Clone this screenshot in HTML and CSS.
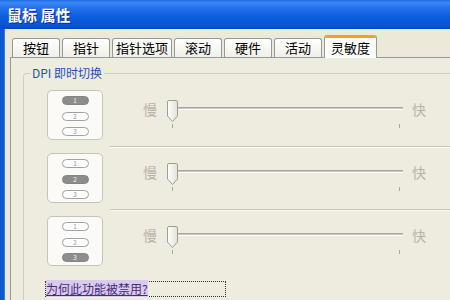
FILE: index.html
```html
<!DOCTYPE html>
<html>
	<head>
		<meta charset="utf-8">
		<title>鼠标 属性</title>
		<link rel="stylesheet" href="styles.css">
	</head>
	<body>
		<div class="window">
			<div class="titlebar">鼠标 属性</div>
			<div class="client">
				<div class="tabs">
					<div class="tab">按钮</div>
					<div class="tab">指针</div>
					<div class="tab">指针选项</div>
					<div class="tab">滚动</div>
					<div class="tab">硬件</div>
					<div class="tab">活动</div>
					<div class="tab active">灵敏度</div>
				</div>
				<div class="panel">
					<fieldset class="group">
						<legend>DPI 即时切换</legend>
						<div class="rows">
							<div class="row">
								<div class="card">
									<div class="pill on">1</div>
									<div class="pill">2</div>
									<div class="pill">3</div>
								</div>
								<div class="slider-col">
									<span class="lbl">慢</span>
									<svg class="slider" width="240" height="32" viewBox="0 0 240 32">
										<defs>
											<linearGradient id="th" x1="0" y1="0" x2="1" y2="0">
												<stop offset="0" stop-color="#ffffff"/>
												<stop offset="1" stop-color="#e2e0d6"/>
											</linearGradient>
										</defs>
										<rect x="12" y="9" width="226" height="1" fill="#aaa79b"/>
										<rect x="12" y="10" width="226" height="1" fill="#c9c6ba"/>
										<rect x="12" y="11" width="226" height="1" fill="#ffffff"/>
										<path d="M2.5 4 Q2.5 2.5 4 2.5 H11 Q12.5 2.5 12.5 4 V18 L7.5 23.5 L2.5 18 Z" fill="url(#th)" stroke="#a09e94"/>
										<rect x="7" y="26" width="1" height="4" fill="#aaa79b"/>
										<rect x="234" y="26" width="1" height="4" fill="#aaa79b"/>
									</svg>
									<span class="lbl fast">快</span>
								</div>
							</div>
							<div class="row">
								<div class="card">
									<div class="pill">1</div>
									<div class="pill on">2</div>
									<div class="pill">3</div>
								</div>
								<div class="slider-col">
									<span class="lbl">慢</span>
									<svg class="slider" width="240" height="32" viewBox="0 0 240 32">
										<rect x="12" y="9" width="226" height="1" fill="#aaa79b"/>
										<rect x="12" y="10" width="226" height="1" fill="#c9c6ba"/>
										<rect x="12" y="11" width="226" height="1" fill="#ffffff"/>
										<path d="M2.5 4 Q2.5 2.5 4 2.5 H11 Q12.5 2.5 12.5 4 V18 L7.5 23.5 L2.5 18 Z" fill="url(#th)" stroke="#a09e94"/>
										<rect x="7" y="26" width="1" height="4" fill="#aaa79b"/>
										<rect x="234" y="26" width="1" height="4" fill="#aaa79b"/>
									</svg>
									<span class="lbl fast">快</span>
								</div>
							</div>
							<div class="row">
								<div class="card">
									<div class="pill">1</div>
									<div class="pill">2</div>
									<div class="pill on">3</div>
								</div>
								<div class="slider-col last">
									<span class="lbl">慢</span>
									<svg class="slider" width="240" height="32" viewBox="0 0 240 32">
										<rect x="12" y="9" width="226" height="1" fill="#aaa79b"/>
										<rect x="12" y="10" width="226" height="1" fill="#c9c6ba"/>
										<rect x="12" y="11" width="226" height="1" fill="#ffffff"/>
										<path d="M2.5 4 Q2.5 2.5 4 2.5 H11 Q12.5 2.5 12.5 4 V18 L7.5 23.5 L2.5 18 Z" fill="url(#th)" stroke="#a09e94"/>
										<rect x="7" y="26" width="1" height="4" fill="#aaa79b"/>
										<rect x="234" y="26" width="1" height="4" fill="#aaa79b"/>
									</svg>
									<span class="lbl fast">快</span>
								</div>
							</div>
						</div>
						<div class="help"><a href="#">为何此功能被禁用?</a></div>
					</fieldset>
				</div>
			</div>
		</div>
	</body>
</html>
```

FILE: styles.css
```css
* {
	margin: 0;
	padding: 0;
	box-sizing: border-box;
}
body {
	width: 450px;
	height: 300px;
	overflow: hidden;
	background: #ece9d8;
	font-family: "Noto Sans CJK SC", sans-serif;
}
.window {
	width: 450px;
	height: 300px;
}
/* 标题栏 */
.titlebar {
	height: 29px;
	padding-left: 7px;
	display: flex;
	align-items: center;
	color: #fff;
	font-size: 15px;
	font-weight: bold;
	text-shadow: 1px 1px #0c2a8c;
	background: linear-gradient(#1f6ee8 0, #3a8af6 10%, #2673ec 25%, #0b5ddc 60%, #0955d6 88%, #0646c0 100%);
}
.client {
	height: 271px;
	border-left: 4px solid #0b57d4;
	box-shadow: inset 1px 0 #2f7bea;
	padding-top: 9px;
}
/* 选项卡 */
.tabs {
	display: flex;
	align-items: flex-end;
	gap: 2px;
	padding-left: 8px;
	height: 19px;
}
.tab {
	height: 19px;
	min-width: 48px;
	padding: 0 3px;
	text-align: center;
	font-size: 13px;
	line-height: 18px;
	color: #000;
	border: 1px solid #919b9c;
	border-bottom: none;
	border-radius: 3px 3px 0 0;
	background: linear-gradient(#ffffff, #f0efe8);
}
.tab.active {
	height: 23px;
	padding: 0 6px;
	margin-bottom: -1px;
	border-top: 3px solid #f0a030;
	background: #fcfcfa;
	position: relative;
	z-index: 1;
	line-height: 19px;
}
.panel {
	margin-left: 6px;
	height: 250px;
	border: 1px solid #919b9c;
	border-right: none;
	background: #eeebdf;
	padding-top: 7px;
}
/* 分组框 */
.group {
	margin-left: 12px;
	border: 1px solid #d0cebf;
	border-right: none;
	border-radius: 4px 0 0 4px;
	padding: 0;
	min-width: 0;
	height: 250px;
}
.group legend {
	margin-left: 6px;
	padding: 0 2px;
	font-size: 12px;
	line-height: 16px;
	color: #2350c0;
}
.rows {
	padding-top: 9px;
}
.row {
	display: flex;
	height: 63px;
	padding-left: 23px;
}
.card {
	width: 56px;
	height: 50px;
	border: 1px solid #c6c4b6;
	border-radius: 5px;
	background: #fbfaf7;
	display: flex;
	flex-direction: column;
	align-items: center;
	padding-top: 5px;
	gap: 6.5px;
}
.pill {
	width: 27px;
	height: 9px;
	border: 1px solid #a2a2a0;
	border-radius: 5px;
	background: #fff;
	color: #9a9a9a;
	font-size: 7px;
	line-height: 7px;
	text-align: center;
}
.pill.on {
	background: #8d8d8b;
	border-color: #858583;
	color: #f0f0f0;
}
/* 滑块 */
.slider-col {
	flex: 1;
	height: 57px;
	margin-left: 7px;
	padding-left: 33px;
	display: flex;
	align-items: flex-start;
	border-bottom: 1px solid #c6c3b3;
	box-shadow: 0 1px 0 #fbfaf5;
}
.slider-col.last {
	border-bottom: none;
	box-shadow: none;
}
.lbl {
	margin-top: 11px;
	font-size: 14px;
	line-height: 16px;
	color: #b7b4a6;
}
.slider {
	margin: 8px 0 0 8px;
}
.lbl.fast {
	margin-left: 7px;
}
.help {
	margin: 2px 0 0 21px;
	width: 181px;
	height: 16px;
	border: 1px dotted #333;
	font-size: 12px;
	line-height: 14px;
}
.help a {
	color: #4a2a7c;
	background: #d9cbec;
	text-decoration: underline;
}
```
